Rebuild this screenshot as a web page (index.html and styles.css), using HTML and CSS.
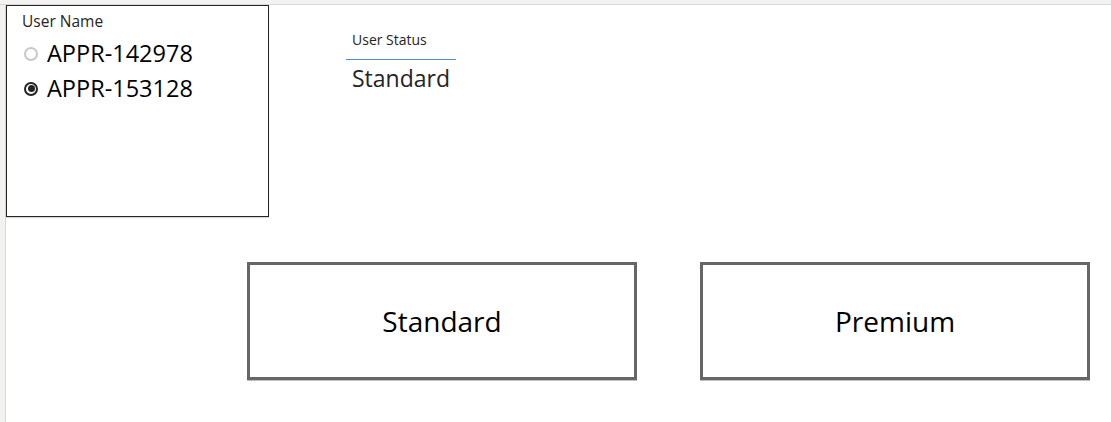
FILE: index.html
```html
<!DOCTYPE html>
<html>
<head>
<meta charset="utf-8">
<link rel="stylesheet" href="styles.css">
</head>
<body>
<div class="topbar"></div>
<div class="main">
  <div class="leftbar"></div>
  <div class="canvas">
    <div class="row-top">
      <div class="slicer">
        <div class="slicer-title">User Name</div>
        <div class="slicer-list">
          <div class="slicer-item"><span class="radio"></span><span class="item-text">APPR-142978</span></div>
          <div class="slicer-item"><span class="radio checked"></span><span class="item-text">APPR-153128</span></div>
        </div>
      </div>
      <div class="card">
        <div class="card-title">User Status</div>
        <div class="card-value">Standard</div>
      </div>
    </div>
    <div class="row-buttons">
      <div class="btn">Standard</div>
      <div class="btn">Premium</div>
    </div>
  </div>
</div>
</body>
</html>
```

FILE: styles.css
```css
html, body {
  margin: 0;
  padding: 0;
  background: #ffffff;
  font-family: "Open Sans", "Noto Sans", sans-serif;
  color: #252423;
}
.topbar {
  height: 4px;
  background: #f3f2f1;
  border-bottom: 1px solid #d8d8d8;
}
.main {
  display: flex;
  height: 417px;
}
.leftbar {
  width: 5px;
  background: #f3f2f1;
  border-right: 1px solid #d8d8d8;
}
.canvas {
  flex: 1;
  display: flex;
  flex-direction: column;
}
.row-top {
  display: flex;
  align-items: flex-start;
}
.slicer {
  box-sizing: border-box;
  width: 263px;
  height: 212px;
  border: 1px solid #252423;
  padding: 5px 0 0 15px;
  box-shadow: 0 1px 1px rgba(0,0,0,0.15);
}
.slicer-title {
  font-size: 15.5px;
  line-height: 20px;
}
.slicer-list {
  margin-top: 5px;
}
.slicer-item {
  display: flex;
  align-items: center;
  height: 35px;
  font-size: 23.5px;
  line-height: 35px;
  color: #000;
}
.radio {
  box-sizing: border-box;
  width: 14px;
  height: 14px;
  border-radius: 50%;
  border: 2px solid #c8c8c8;
  margin-left: 2px;
  margin-right: 9px;
  background: #fff;
  position: relative;
}
.radio.checked {
  border-color: #252423;
}
.radio.checked::after {
  content: "";
  position: absolute;
  left: 1.5px;
  top: 1.5px;
  width: 7px;
  height: 7px;
  border-radius: 50%;
  background: #252423;
}
.card {
  margin-left: 77px;
  margin-top: 25px;
  width: 110px;
}
.card-title {
  font-size: 14px;
  line-height: 20px;
  padding-left: 6px;
  padding-bottom: 9px;
  border-bottom: 1px solid #4a90e2;
}
.card-value {
  font-size: 23px;
  line-height: 32px;
  padding-left: 6px;
  margin-top: 2px;
  white-space: nowrap;
}
.row-buttons {
  display: flex;
  gap: 63px;
  margin-top: 45px;
  padding-left: 241px;
}
.btn {
  box-sizing: border-box;
  width: 390px;
  height: 118px;
  border: 3px solid #666666;
  box-shadow: 0 1px 0 #c0c0c0;
  display: flex;
  align-items: center;
  justify-content: center;
  font-size: 28px;
  color: #000;
}
```
